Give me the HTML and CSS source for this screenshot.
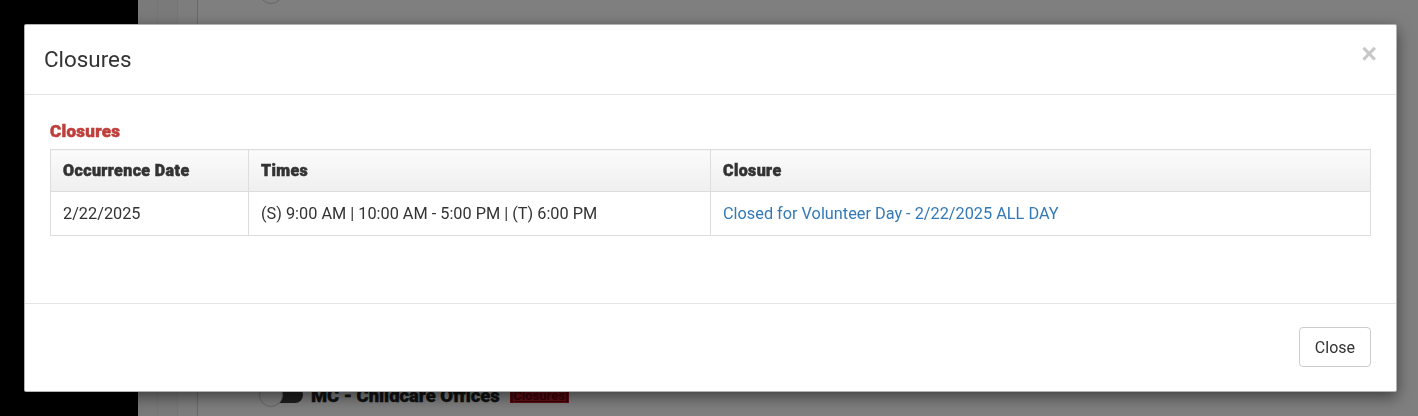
FILE: index.html
```html
<!DOCTYPE html>
<html>
<head>
  <title>Closures</title>
  <link rel="stylesheet" href="styles.css">
</head>
<body>
  <div class="page">
    <div class="sidebar"></div>
    <div class="main">
      <div class="rail"></div>
      <div class="rail"></div>
      <div class="rail rail-last"></div>
      <div class="list">
        <div class="row row-first">
          <span class="switch"><span class="knob"></span></span>
        </div>
        <div class="row">
          <span class="switch"><span class="knob"></span></span>
          <span class="name">MC - Childcare Offices</span>
          <a class="tag" href="#">[Closures]</a>
        </div>
      </div>
    </div>
  </div>

  <div class="backdrop"></div>

  <div class="modal">
    <div class="modal-header">
      <h4 class="modal-title">Closures</h4>
      <button class="close" type="button">&times;</button>
    </div>

    <div class="modal-body">
      <h5 class="section-title">Closures</h5>
      <table class="closures">
        <thead>
          <tr>
            <th class="col-date">Occurrence Date</th>
            <th class="col-times">Times</th>
            <th>Closure</th>
          </tr>
        </thead>
        <tbody>
          <tr>
            <td>2/22/2025</td>
            <td>(S) 9:00 AM | 10:00 AM - 5:00 PM | (T) 6:00 PM</td>
            <td><a href="#">Closed for Volunteer Day - 2/22/2025 ALL DAY</a></td>
          </tr>
        </tbody>
      </table>
    </div>

    <div class="modal-footer">
      <button class="btn" type="button">Close</button>
    </div>
  </div>
</body>
</html>
```

FILE: styles.css
```css
body {
  margin: 0;
  font-family: Roboto, "Liberation Sans", sans-serif;
  color: #333;
  overflow: hidden;
}

/* page behind the dialog */
.page {
  display: flex;
  height: 416px;
}

.sidebar {
  width: 138px;
  background-color: #000;
}

.main {
  flex: 1;
  display: flex;
  background-color: #fff;
}

.rail {
  width: 19px;
  background-color: #f4f4f4;
  border-right: 1px solid #ececec;
}

.rail-last {
  background-color: #fafafa;
  border-right: 1px solid #d2d2d2;
}

.list {
  padding-left: 61px;
}

.row {
  display: flex;
  align-items: center;
  height: 24px;
}

.row-first {
  margin-top: -20px;
  margin-bottom: 379px;
}

.switch {
  position: relative;
  width: 44px;
  height: 24px;
  margin-right: 8px;
}

.switch::before {
  content: "";
  position: absolute;
  left: 10px;
  right: 0;
  top: 4px;
  height: 16px;
  background-color: #3a3a3a;
  border-radius: 0 8px 8px 0;
}

.knob {
  position: absolute;
  left: 0;
  top: 0;
  width: 22px;
  height: 22px;
  background-color: #fff;
  border: 1px solid #ccc;
  border-radius: 50%;
}

.name {
  font-size: 18.4px;
  font-weight: 900;
  color: #222;
  -webkit-text-stroke: 0.4px #222;
}

.tag {
  margin-left: 10px;
  font-size: 13px;
  font-weight: bold;
  color: #6a0010;
  background-color: #c41c2a;
  text-decoration: underline;
}

.backdrop {
  position: fixed;
  top: 0;
  left: 0;
  right: 0;
  bottom: 0;
  background-color: rgba(0, 0, 0, 0.5);
}

/* dialog */
.modal {
  position: absolute;
  left: 24px;
  top: 24px;
  width: 1373px;
  box-sizing: border-box;
  background-color: #fff;
  border: 1px solid rgba(0, 0, 0, 0.3);
  border-radius: 2px;
  box-shadow: 0 5px 15px rgba(0, 0, 0, 0.5);
}

.modal-header {
  display: flex;
  justify-content: space-between;
  padding: 20px 19px;
  border-bottom: 1px solid #e5e5e5;
}

.modal-title {
  margin: 0;
  font-size: 22.4px;
  font-weight: normal;
  line-height: 29px;
  color: #333;
}

.close {
  margin: -11px 0 0;
  padding: 0;
  border: none;
  background: none;
  font-family: "Liberation Sans", sans-serif;
  font-size: 27px;
  font-weight: bold;
  line-height: 1;
  color: #c8c8c8;
  cursor: pointer;
}

.modal-body {
  padding: 25px 25px 25px;
}

.section-title {
  margin: 0 0 7px;
  font-size: 17px;
  font-weight: 900;
  line-height: 22px;
  letter-spacing: 0.3px;
  color: #be3f3c;
  -webkit-text-stroke: 0.5px #be3f3c;
}

.closures {
  width: 100%;
  margin-bottom: 42px;
  border-collapse: collapse;
  border: 1px solid #ddd;
  font-size: 16.3px;
}

.closures th,
.closures td {
  text-align: left;
  border: 1px solid #ddd;
  padding: 0 12px;
}

.closures th {
  height: 41px;
  font-size: 16px;
  font-weight: 900;
  letter-spacing: 0.4px;
  color: #333;
  -webkit-text-stroke: 0.5px #333;
  background: linear-gradient(#fbfbfb, #efefef);
}

.closures td {
  height: 43px;
}

.col-date {
  width: 173px;
}

.col-times {
  width: 437px;
}

.closures a {
  color: #337ab7;
  text-decoration: none;
}

.modal-footer {
  display: flex;
  justify-content: flex-end;
  padding: 23px 25px 24px;
  border-top: 1px solid #e5e5e5;
}

.btn {
  height: 40px;
  padding: 0 15px;
  font-family: Roboto, "Liberation Sans", sans-serif;
  font-size: 16px;
  color: #333;
  background-color: #fff;
  border: 1px solid #ccc;
  border-radius: 4px;
  cursor: pointer;
}
```
